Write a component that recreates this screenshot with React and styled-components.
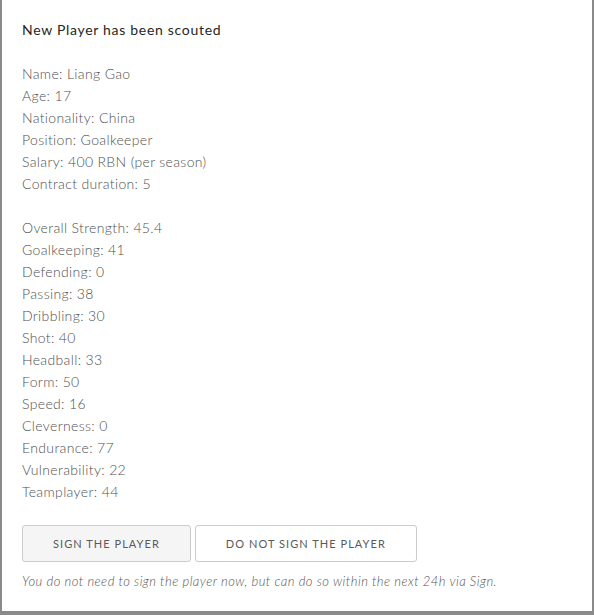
import React from "react";
import styled, { createGlobalStyle } from "styled-components";

const GlobalStyle = createGlobalStyle`
  html, body {
    margin: 0;
    padding: 0;
    background: #8a8a8a;
  }
  * {
    box-sizing: border-box;
  }
`;

const Backdrop = styled.div`
  width: 594px;
  height: 615px;
  padding: 0 2px 4px 2px;
  background: #8a8a8a;
`;

const Modal = styled.div`
  height: 100%;
  background: #fff;
  padding: 20px 20px;
  font-family: Lato, "Open Sans", sans-serif;
  color: #555;
`;

const Title = styled.div`
  font-size: 14px;
  line-height: 20px;
  font-weight: 400;
  letter-spacing: 0.7px;
  color: #262626;
  margin-bottom: 23px;
`;

const Info = styled.div`
  font-size: 14px;
  line-height: 22px;
  font-weight: 300;
  letter-spacing: 0.35px;
  color: #505050;
  margin-bottom: ${({ $gap }) => $gap || 0}px;
`;

const Actions = styled.div`
  display: flex;
  gap: 4px;
  margin-top: 22px;
`;

const Button = styled.button`
  height: 37px;
  padding: 0 30px;
  border: 1px solid #ccc;
  border-radius: 3px;
  background: ${({ $primary }) => ($primary ? "#f5f5f5" : "#fff")};
  font-family: Lato, "Open Sans", sans-serif;
  font-size: 11px;
  font-weight: 400;
  letter-spacing: 1.05px;
  text-transform: uppercase;
  color: #5a5a5a;
  cursor: pointer;
`;

const Note = styled.p`
  margin: 10px 0 0;
  font-size: 13px;
  line-height: 18px;
  font-style: italic;
  font-weight: 300;
  letter-spacing: 0.47px;
  color: #555;
`;

const details = [
  "Name: Liang Gao",
  "Age: 17",
  "Nationality: China",
  "Position: Goalkeeper",
  "Salary: 400 RBN (per season)",
  "Contract duration: 5",
];

const stats = [
  ["Overall Strength", "45.4"],
  ["Goalkeeping", "41"],
  ["Defending", "0"],
  ["Passing", "38"],
  ["Dribbling", "30"],
  ["Shot", "40"],
  ["Headball", "33"],
  ["Form", "50"],
  ["Speed", "16"],
  ["Cleverness", "0"],
  ["Endurance", "77"],
  ["Vulnerability", "22"],
  ["Teamplayer", "44"],
];

export default function App() {
  return (
    <>
      <GlobalStyle />
      <Backdrop>
        <Modal>
          <Title>New Player has been scouted</Title>
          {details.map((line, i) => (
            <Info key={line} $gap={i === details.length - 1 ? 22 : 0}>
              {line}
            </Info>
          ))}
          {stats.map(([label, value]) => (
            <Info key={label}>
              {label}: {value}
            </Info>
          ))}
          <Actions>
            <Button $primary>Sign the player</Button>
            <Button>Do not sign the player</Button>
          </Actions>
          <Note>
            You do not need to sign the player now, but can do so within the
            next 24h via Sign.
          </Note>
        </Modal>
      </Backdrop>
    </>
  );
}
